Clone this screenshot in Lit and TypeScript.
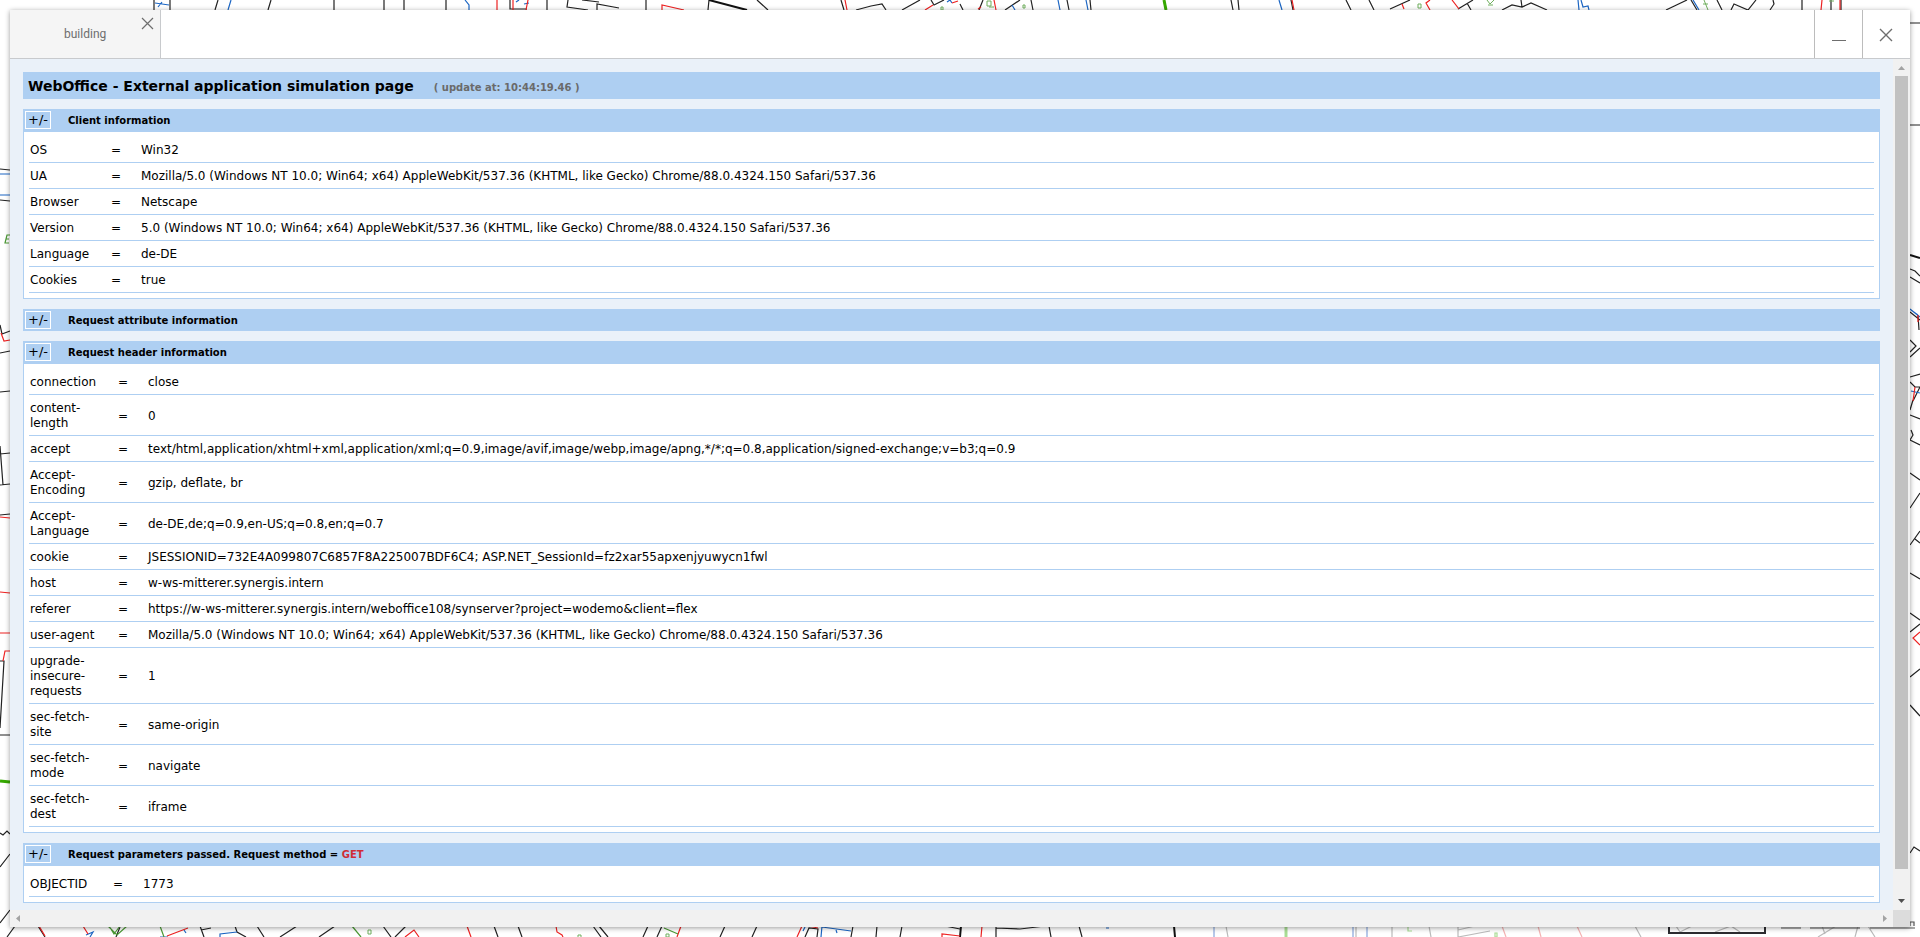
import { LitElement, html, svg, css } from "lit";
import { customElement, property, state } from "lit/decorators.js";

type Row = [string, string];

interface Stroke {
  c: string;
  w?: number;
  d: string;
}

const PARCELS: Stroke[] = [
  // north edge
  { c: "#222", d: "M154 0V10M170 0V10M218 0L215 10M271 0L268 10M334 0V10M384 0V10M404 0V10M446 0V10M510 0V9H527M547 0V10M568 0L567 7L588 10M582 0L599 2M597 10V4L619 8M646 0V10M708 10L709 0M757 0L768 10M841 0L844 10M856 10L871 6L882 4L886 10M902 10L920 0M931 0L934 5L944 0M960 4L963 10M979 10L983 0M1005 10L1020 0M1031 0L1033 10M1067 0L1069 10M1090 0L1091 10M1231 0L1233 10M1238 0L1239 10M1291 0L1293 10M1346 0L1351 10M1369 0L1374 10M1390 9L1410 0M1458 9L1473 0M1467 3L1471 10M1502 10L1512 5L1522 7L1531 3L1547 10M1521 0L1522 7M1666 10L1687 0M1691 0L1697 10M1717 0L1722 10M1731 10L1734 4L1748 10L1756 0M1773 0L1774 4L1770 10M1802 0V10M1831 0V10M1841 0V10" },
  { c: "#111", w: 2, d: "M709 0L747 10" },
  { c: "#1c66c4", d: "M155 3L169 5M158 7L162 2M231 0L228 10M465 0L469 5V10M516 2L519 0M524 4L529 3M947 2L950 0L952 3M1012 5L1015 10M1058 0L1060 10M1086 0L1088 10M1279 0L1282 10M1578 0L1579 10M1581 0L1583 7L1588 6L1589 10M1693 0L1699 10" },
  { c: "#e22", d: "M497 0V10M513 0V10M528 0L526 10M662 10V5L684 10M845 0L847 10M925 10L933 5M952 3L958 1M978 9L981 7M994 0L996 10M1292 0L1294 10M1402 4L1404 9M1430 0L1426 3L1430 10M1452 0L1459 9M1822 0L1821 10M1840 0V10" },
  { c: "#35a800", w: 3, d: "M1164 0L1166 10" },
  { c: "#6fae5c", w: 1, d: "M1704 0L1708 10M1703 4H1708M1829 1H1834M987 1h4v5h-4zM989 7h5M1023 5h2v3h-2zM941 7h2v3h-2zM1418 4h3v4h-3zM1487 0L1490 4L1494 0M1488 5h5" },
  // east edge
  { c: "#222", d: "M1910 23H1920M1910 125H1920M1910 269L1915 271L1920 276M1910 277L1920 283M1910 312L1920 320M1918 315L1919 330M1910 340L1916 346L1910 352M1910 357L1920 348M1910 377L1920 374M1910 382L1915 387H1920M1913 400L1910 410M1913 401L1920 387M1910 415L1920 419M1911 430L1913 435L1910 440L1920 445M1910 473L1920 480M1910 508L1920 493M1910 545L1920 531M1915 539L1920 543M1910 573L1920 579M1910 613L1920 620M1910 632L1920 624M1910 677L1920 669M1910 705L1920 716M1910 853L1914 847L1920 851" },
  { c: "#111", w: 2, d: "M1910 255L1920 258" },
  { c: "#1c66c4", d: "M1910 309L1920 317M1911 310L1918 315M1911 391L1920 393" },
  { c: "#e22", d: "M1915 387L1913 401M1920 632L1913 638L1920 645M1918 315V322" },
  // west edge
  { c: "#222", d: "M0 169L10 170M0 200L10 201M0 325L2 334L10 331M0 353L10 351M0 392L10 391M0 446L3 485M0 454L10 453M0 485L10 484M0 515L10 514M0 661H4L0 728M0 735H10M0 833L3 835L7 831L10 834M0 867L10 854M0 923L10 910" },
  { c: "#1c66c4", d: "M0 174H10M0 195H10" },
  { c: "#e22", d: "M1 333L4 341L10 340M0 517L10 518M0 592L10 593M0 633H10M10 651H5L3 661" },
  { c: "#35a800", w: 3, d: "M0 781L10 782" },
  { c: "#4c9a35", d: "M10 235H7L5 243H9M6 239H9" },
  // south edge
  { c: "#222", d: "M15 926L7 937M38 926L45 937M120 927L116 937M200 926L204 937M201 930L211 928M235 926L237 932L246 937M257 926L264 937M280 937L297 926M319 937L335 926M383 926L391 937M395 937L406 926M494 926L498 937M518 926L522 937M593 926L601 937M599 926L608 937M648 926L643 937M662 926L657 937M725 926L720 937M757 926L752 937M805 937L809 928L818 929L817 937M853 926L851 937M877 926L876 937M902 926L900 937M945 926L960 929M996 926V937M996 928L1020 929L1045 926M1049 926L1051 937M1079 926L1082 937" },
  { c: "#111", w: 2, d: "M961 926L960 937M1174 926L1175 937" },
  { c: "#1c66c4", d: "M86 935L93 932L90 937M160 937H168M184 930L186 933M220 937V934L237 932M803 931L805 927M822 926L821 937M822 927L851 931M836 930L837 933M1106 928H1109" },
  { c: "#e22", d: "M39 926L45 936M83 926L88 934M167 936L188 928M405 937L414 930L419 937M467 926L471 937M556 926L557 932L562 935L563 937M681 926L677 937M802 926L797 937M808 926L818 928M960 936L942 934V937M982 926L981 937" },
  { c: "#4c9a35", d: "M108 926L117 935L127 926M109 926L114 934L120 926M160 926L164 937M352 926L361 937M664 928L678 934" },
  { c: "#6fae5c", w: 1, d: "M368 930h3v4h-3zM578 935h3v4h-3zM666 934h3v3h-3z" },
  { c: "#bbb", d: "M1226 926L1228 937M1356 926V937M1392 926V937M1429 926L1431 937M1458 926V937M1458 937L1490 931M1458 930L1475 926M1635 926L1641 937M1676 926L1680 932L1692 926M1715 932L1731 926L1740 932M1818 937L1836 926M1822 926L1825 934M1858 926L1855 937M1868 926L1875 937" },
  { c: "#b7c9ea", w: 2, d: "M1214 926V937M1353 926V937M1367 926V937" },
  { c: "#f5b3b3", d: "M1502 926L1506 937M1538 926L1541 937M1577 926L1582 937" },
  { c: "#a9dd94", w: 3, d: "M1286 926V937" },
  { c: "#a9dd94", d: "M1408 926V931H1412M1495 933h2v4h-2z" },
  { c: "#2c2c30", w: 2, d: "M1669 920V933H1765V920" },
  { c: "#555", d: "M1781 928H1801M1810 928H1860M1870 928H1915M1910 926V922H1914V926" },
];

@customElement("map-backdrop")
class MapBackdrop extends LitElement {
  static styles = css`
    :host {
      position: absolute;
      inset: 0;
      overflow: hidden;
    }
    .map {
      display: block;
      width: 100%;
      height: 100%;
    }
  `;

  render() {
    return html`
      <svg class="map" viewBox="0 0 1920 937" preserveAspectRatio="none" aria-hidden="true">
        ${PARCELS.map(
          (s) => svg`<path d=${s.d} fill="none" stroke=${s.c} stroke-width=${s.w ?? 1.2}></path>`
        )}
      </svg>
    `;
  }
}

@customElement("info-section")
class InfoSection extends LitElement {
  @property() heading = "";
  @property() accent = "";
  @property() size = "medium";
  @property({ attribute: false }) rows: Row[] = [];
  @property({ type: Boolean }) open = false;

  static styles = css`
    :host {
      display: block;
      border: 1px solid #aecff2;
      background: #fff;
    }
    .head {
      display: flex;
      align-items: center;
      gap: 17px;
      height: 20px;
      padding-left: 1px;
      background: #aecff2;
    }
    .head.open {
      padding-bottom: 2px;
    }
    .toggle {
      box-sizing: border-box;
      width: 26px;
      height: 18px;
      margin: 0;
      padding: 0;
      border: 1px solid #fff;
      background: none;
      color: #000;
      font: 13px/16px "DejaVu Sans", sans-serif;
      cursor: pointer;
    }
    .title {
      margin: 0;
      padding-top: 2px;
      font: bold 10px/18px "DejaVu Sans", sans-serif;
    }
    .accent {
      color: #d02c36;
    }
    .rows {
      padding: 5px;
    }
    .table {
      width: 100%;
      border-collapse: separate;
      border-spacing: 0;
      table-layout: fixed;
    }
    .cell {
      box-sizing: border-box;
      padding: 6px 1px 4px;
      border-bottom: 1px solid #aecff2;
      font-weight: normal;
      text-align: left;
      vertical-align: middle;
      line-height: 15px;
    }
    .key {
      padding-right: 16px;
    }
    .narrow .key {
      width: 81px;
    }
    .medium .key {
      width: 83px;
    }
    .wide .key {
      width: 88px;
    }
    .eq {
      width: 30px;
    }
  `;

  private toggle() {
    this.open = !this.open;
  }

  render() {
    const shown = this.open && this.rows.length > 0;
    return html`
      <div class="head ${shown ? "open" : ""}">
        <button class="toggle" aria-label="Toggle ${this.heading}" @click=${this.toggle}>+/-</button>
        <h2 class="title">${this.heading} <span class="accent">${this.accent}</span></h2>
      </div>
      ${shown
        ? html`<div class="rows">
            <table class="table ${this.size}">
              <tbody>
                ${this.rows.map(
                  ([k, v]) => html`<tr>
                    <th class="cell key" scope="row">${k}</th>
                    <td class="cell eq">=</td>
                    <td class="cell">${v}</td>
                  </tr>`
                )}
              </tbody>
            </table>
          </div>`
        : ""}
    `;
  }
}

const CLIENT: Row[] = [
  ["OS", "Win32"],
  ["UA", "Mozilla/5.0 (Windows NT 10.0; Win64; x64) AppleWebKit/537.36 (KHTML, like Gecko) Chrome/88.0.4324.150 Safari/537.36"],
  ["Browser", "Netscape"],
  ["Version", "5.0 (Windows NT 10.0; Win64; x64) AppleWebKit/537.36 (KHTML, like Gecko) Chrome/88.0.4324.150 Safari/537.36"],
  ["Language", "de-DE"],
  ["Cookies", "true"],
];

const HEADERS: Row[] = [
  ["connection", "close"],
  ["content-length", "0"],
  ["accept", "text/html,application/xhtml+xml,application/xml;q=0.9,image/avif,image/webp,image/apng,*/*;q=0.8,application/signed-exchange;v=b3;q=0.9"],
  ["Accept-Encoding", "gzip, deflate, br"],
  ["Accept-Language", "de-DE,de;q=0.9,en-US;q=0.8,en;q=0.7"],
  ["cookie", "JSESSIONID=732E4A099807C6857F8A225007BDF6C4; ASP.NET_SessionId=fz2xar55apxenjyuwycn1fwl"],
  ["host", "w-ws-mitterer.synergis.intern"],
  ["referer", "https://w-ws-mitterer.synergis.intern/weboffice108/synserver?project=wodemo&client=flex"],
  ["user-agent", "Mozilla/5.0 (Windows NT 10.0; Win64; x64) AppleWebKit/537.36 (KHTML, like Gecko) Chrome/88.0.4324.150 Safari/537.36"],
  ["upgrade-insecure-requests", "1"],
  ["sec-fetch-site", "same-origin"],
  ["sec-fetch-mode", "navigate"],
  ["sec-fetch-dest", "iframe"],
];

const PARAMS: Row[] = [["OBJECTID", "1773"]];

@customElement("app-root")
class AppRoot extends LitElement {
  @state() private updatedAt = "10:44:19.46";

  static styles = css`
    :host {
      display: block;
      position: relative;
      box-sizing: border-box;
      height: 100vh;
      padding: 10px;
      overflow: hidden;
      background: #fff;
      color: #000;
      font: 12px/15px "DejaVu Sans", sans-serif;
    }
    .window {
      position: relative;
      display: flex;
      flex-direction: column;
      height: 100%;
      background: #fff;
      box-shadow: 0 1px 5px rgba(0, 0, 0, 0.4);
    }
    .bar {
      display: flex;
      flex: none;
      height: 48px;
      border-bottom: 1px solid #c8cacd;
    }
    .tab {
      display: flex;
      align-items: center;
      box-sizing: border-box;
      width: 151px;
      padding-left: 54px;
      border-right: 1px solid #c8cacd;
      background: #f5f5f5;
      color: #6e6e6e;
      font: 12px/16px Roboto, sans-serif;
    }
    .label {
      flex: 1;
    }
    .icon-button {
      display: flex;
      align-items: center;
      justify-content: center;
      margin: 0;
      padding: 0;
      border: 0;
      background: none;
      color: #6e6e6e;
      cursor: pointer;
    }
    .tab-close {
      align-self: flex-start;
      width: 25px;
      height: 27px;
    }
    .spacer {
      flex: 1;
    }
    .control {
      box-sizing: border-box;
      width: 48px;
      border-left: 1px solid #bcbcbc;
    }
    .view {
      display: grid;
      flex: 1;
      min-height: 0;
      grid-template-columns: minmax(0, 1fr) 17px;
      grid-template-rows: minmax(0, 1fr) 17px;
    }
    .page {
      display: flex;
      flex-direction: column;
      gap: 10px;
      overflow: hidden;
      padding: 13px 13px 0;
      background: #eaf1f9;
    }
    .banner {
      display: flex;
      flex: none;
      align-items: baseline;
      gap: 20px;
      padding: 2px 5px 0;
      background: #aecff2;
    }
    .heading {
      margin: 0;
      font: bold 14px/25px "DejaVu Sans", sans-serif;
    }
    .stamp {
      color: #6a6a6a;
      font: bold 10px/15px "DejaVu Sans", sans-serif;
    }
    .section {
      flex: none;
    }
    .scroll {
      display: flex;
      background: #f1f1f1;
    }
    .vertical {
      flex-direction: column;
    }
    .arrow {
      flex: none;
      width: 17px;
      height: 17px;
    }
    .thumb {
      flex: 1 1 auto;
      margin: 0 2px;
      background: #c1c1c1;
    }
    .rest {
      flex: none;
      height: 24px;
    }
    .horizontal {
      justify-content: space-between;
    }
    .corner {
      background: #dcdcdc;
    }
  `;

  render() {
    return html`
      <map-backdrop></map-backdrop>
      <main class="window">
        <header class="bar">
          <div class="tab">
            <span class="label">building</span>
            <button class="icon-button tab-close" aria-label="Close tab">
              <svg width="13" height="13" viewBox="0 0 13 13"><path d="M1 1L12 12M12 1L1 12" fill="none" stroke="currentColor" stroke-width="1.2" /></svg>
            </button>
          </div>
          <div class="spacer"></div>
          <button class="icon-button control" aria-label="Minimize">
            <svg width="16" height="16" viewBox="0 0 16 16"><path d="M1 14.5H15" fill="none" stroke="currentColor" /></svg>
          </button>
          <button class="icon-button control" aria-label="Close">
            <svg width="15" height="15" viewBox="0 0 15 15"><path d="M1 2L13 14M13 2L1 14" fill="none" stroke="currentColor" stroke-width="1.4" /></svg>
          </button>
        </header>
        <div class="view">
          <div class="page">
            <div class="banner">
              <h1 class="heading">WebOffice - External application simulation page</h1>
              <span class="stamp">( update at: ${this.updatedAt} )</span>
            </div>
            <info-section class="section" heading="Client information" size="narrow" .rows=${CLIENT} open></info-section>
            <info-section class="section" heading="Request attribute information"></info-section>
            <info-section class="section" heading="Request header information" size="wide" .rows=${HEADERS} open></info-section>
            <info-section class="section" heading="Request parameters passed. Request method =" accent="GET" size="medium" .rows=${PARAMS} open></info-section>
          </div>
          <div class="scroll vertical">
            <svg class="arrow" viewBox="0 0 17 17"><path d="M5 11L8.5 7L12 11Z" fill="#a3a3a3" /></svg>
            <div class="thumb"></div>
            <div class="rest"></div>
            <svg class="arrow" viewBox="0 0 17 17"><path d="M5 6L8.5 10L12 6Z" fill="#505050" /></svg>
          </div>
          <div class="scroll horizontal">
            <svg class="arrow" viewBox="0 0 17 17"><path d="M10 5L6 8.5L10 12Z" fill="#a3a3a3" /></svg>
            <svg class="arrow" viewBox="0 0 17 17"><path d="M7 5L11 8.5L7 12Z" fill="#a3a3a3" /></svg>
          </div>
          <div class="corner"></div>
        </div>
      </main>
    `;
  }
}
